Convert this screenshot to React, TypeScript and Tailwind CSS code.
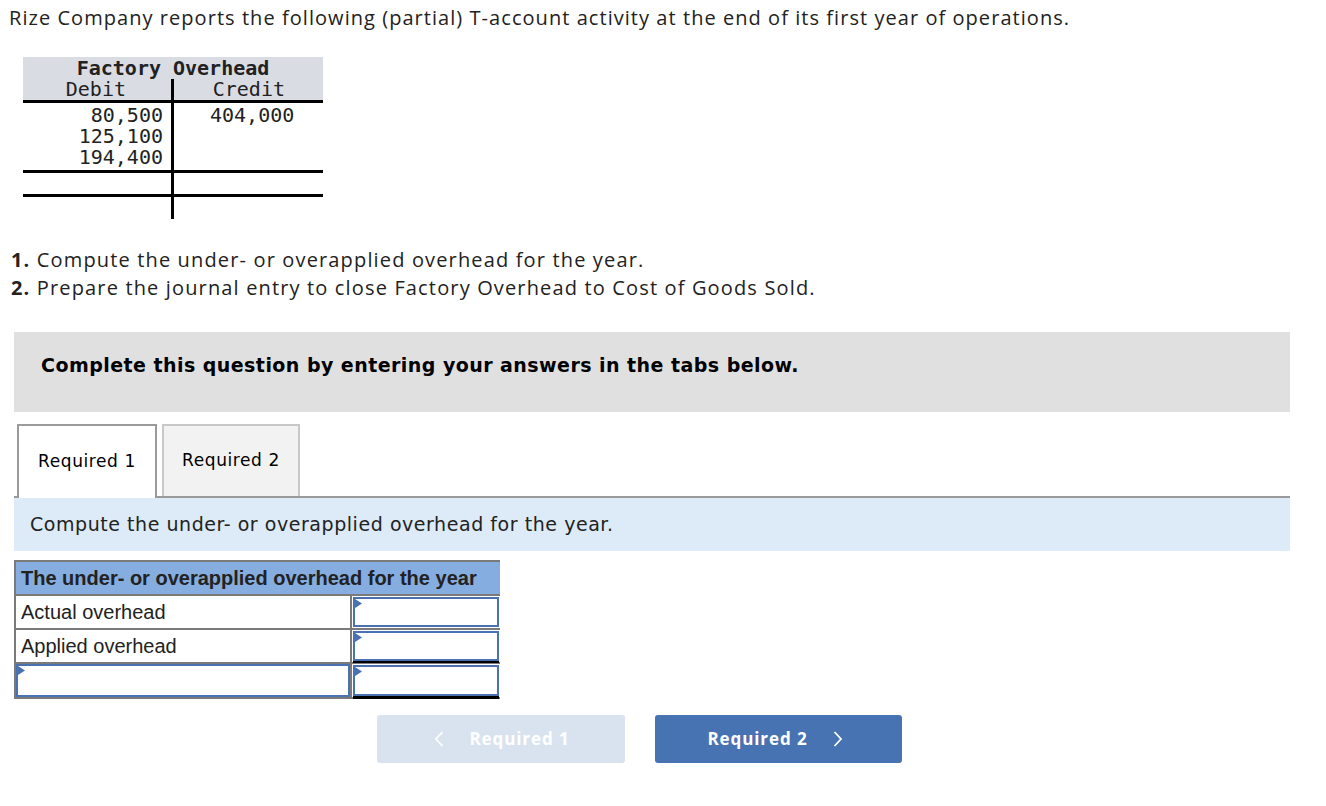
import React from 'react';

function Marker() {
  return (
    <svg width="7" height="9" viewBox="0 0 7 9" className="absolute left-0 top-0">
      <polygon points="0,0 7,4.5 0,9" fill="#4a72b0" />
    </svg>
  );
}

function InputCell({ under }: { under?: 'single' | 'double' }) {
  return (
    <div
      className={
        'relative h-full bg-white border-2 border-[#4a72b0] ' +
        (under === 'single' ? 'shadow-[0_2px_0_#000]' : under === 'double' ? 'shadow-[0_3px_0_#000]' : '')
      }
    >
      <Marker />
    </div>
  );
}

export default function App() {
  const sans = { fontFamily: '"Open Sans", Lato, sans-serif' };
  return (
    <div className="w-[1326px] h-[806px] bg-white text-[#222] relative" style={sans}>
      <p className="pl-[9px] pt-[4px] text-[20px] tracking-[1.05px] leading-[28px] text-[#222]">
        Rize Company reports the following (partial) T-account activity at the end of its first year of operations.
      </p>

      {/* T-account */}
      <div className="ml-[23px] mt-[25px] w-[300px] font-['DejaVu_Sans_Mono',monospace] text-[20px] leading-[21px] text-[#222]">
        <div className="bg-[#dadce4] pt-[1px]">
          <div className="text-center font-bold">Factory Overhead</div>
          <div className="grid grid-cols-[148px_3px_149px]">
            <div className="text-right pr-[45px]">Debit</div>
            <div className="bg-black" />
            <div className="text-right pr-[38px]">Credit</div>
          </div>
        </div>
        <div className="h-[3px] bg-black" />
        <div className="grid grid-cols-[148px_3px_149px]">
          <div className="text-right pr-[8px] pt-[2px] pb-[2px]">
            <div>80,500</div>
            <div>125,100</div>
            <div>194,400</div>
          </div>
          <div className="bg-black" />
          <div className="pl-[36px] pt-[2px]">404,000</div>
        </div>
        <div className="h-[3px] bg-black" />
        <div className="grid grid-cols-[148px_3px_149px] h-[21px]">
          <div />
          <div className="bg-black" />
          <div />
        </div>
        <div className="h-[3px] bg-black" />
        <div className="grid grid-cols-[148px_3px_149px] h-[22px]">
          <div />
          <div className="bg-black" />
          <div />
        </div>
      </div>

      <div className="pl-[11px] mt-[27px] text-[20px] tracking-[1.15px] leading-[28px] text-[#222]">
        <p><span className="font-bold">1.</span> Compute the under- or overapplied overhead for the year.</p>
        <p><span className="font-bold">2.</span> Prepare the journal entry to close Factory Overhead to Cost of Goods Sold.</p>
      </div>

      <div className="mx-[14px] w-[1276px] mt-[30px] h-[80px] bg-[#e0e0e0] pl-[27px] pt-[20px] font-['DejaVu_Sans',Verdana,sans-serif] font-bold text-[19px] tracking-[0.45px] leading-[26px] text-black">
        Complete this question by entering your answers in the tabs below.
      </div>

      {/* Tabs */}
      <div className="ml-[14px] w-[1276px] mt-[10px] font-['DejaVu_Sans',Verdana,sans-serif] text-[17px] tracking-[0.6px] text-black">
        <div className="flex items-end h-[74px] pl-[3px] gap-[5px]">
          <div className="w-[140px] h-[74px] bg-white border-2 border-b-0 border-[#9a9a9a] flex items-center justify-center relative z-10 -mb-[2px]">
            Required 1
          </div>
          <div className="w-[138px] h-[72px] bg-[#f2f2f2] border-2 border-b-0 border-[#c8c8c8] flex items-center justify-center">
            Required 2
          </div>
        </div>
        <div className="h-[2px] bg-[#9a9a9a]" />
        <div className="h-[53px] bg-[#ddeaf7] pl-[16px] flex items-center text-[19px] tracking-[0.55px] text-[#222]">
          Compute the under- or overapplied overhead for the year.
        </div>
      </div>

      {/* Answer table */}
      <div className="ml-[14px] mt-[9px] w-[486px] border-2 border-[#7a7a7a] bg-[#7a7a7a] font-['Liberation_Sans',Arial,sans-serif] text-[20px] text-[#222] grid grid-cols-[334px_148px] gap-[2px]">
        <div className="col-span-2 h-[32px] bg-[#86addf] font-bold pl-[5px] flex items-center">
          The under- or overapplied overhead for the year
        </div>
        <div className="h-[32px] bg-white pl-[5px] flex items-center">Actual overhead</div>
        <div className="h-[32px] bg-white p-px"><InputCell /></div>
        <div className="h-[32px] bg-white pl-[5px] flex items-center">Applied overhead</div>
        <div className="h-[32px] bg-white p-px"><InputCell under="single" /></div>
        <div className="h-[33px] bg-white"><InputCell /></div>
        <div className="h-[33px] bg-white p-px"><InputCell under="double" /></div>
      </div>

      {/* Navigation */}
      <div className="flex gap-[30px] ml-[377px] mt-[16px] text-[17px] tracking-[0.9px] font-bold text-white">
        <div className="w-[248px] h-[48px] rounded-[3px] bg-[#d9e3ef] flex items-center justify-center gap-[25px] pl-[2px]">
          <svg width="10" height="18" viewBox="0 0 10 18"><path d="M8.5 2 L2 9 L8.5 16" stroke="white" strokeWidth="1.8" fill="none" /></svg>
          <span>Required 1</span>
        </div>
        <div className="w-[247px] h-[48px] rounded-[3px] bg-[#4873b3] flex items-center justify-center gap-[25px] pr-[7px]">
          <span>Required 2</span>
          <svg width="10" height="18" viewBox="0 0 10 18"><path d="M1.5 2 L8 9 L1.5 16" stroke="white" strokeWidth="1.8" fill="none" /></svg>
        </div>
      </div>
    </div>
  );
}
